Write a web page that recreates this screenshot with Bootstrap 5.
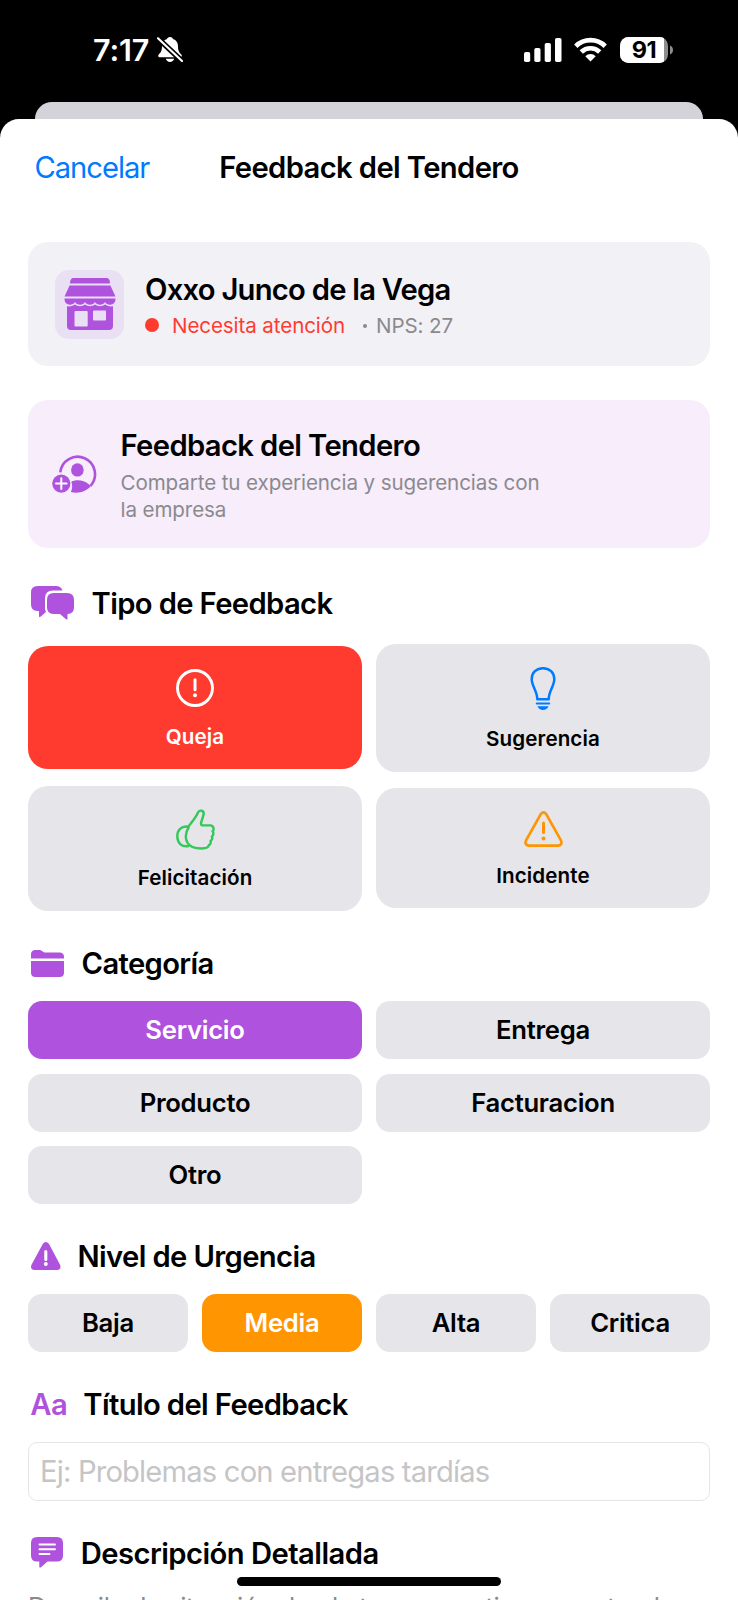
<!DOCTYPE html>
<html lang="es">
<head>
<meta charset="utf-8">
<meta name="viewport" content="width=device-width, initial-scale=1">
<title>Feedback del Tendero</title>
<link href="https://cdn.jsdelivr.net/npm/bootstrap@5.3.0/dist/css/bootstrap.min.css" rel="stylesheet">
<style>
  :root { --purple:#af52de; --red:#ff3b30; --blue:#007aff; --green:#34c759; --orange:#ff9500; --fill:#e5e5ea; --muted:#8a8a8e; }
  body { font-family: Inter, "Liberation Sans", sans-serif; background:#000; color:#000; overflow:hidden; }
  .phone { width:738px; height:1600px; }
  .statusbar { height:101.6px; padding:0 64px 2px 93px; }
  .clock { font-size:30.5px; font-weight:600; letter-spacing:-.1px; line-height:36px; }
  .backsheet { height:35px; margin:0 35px -18px; background:#d4d3d9; border-radius:17px 17px 0 0; }
  .sheet { height:1482px; border-radius:19px 19px 0 0; padding:0 28px; position:relative; }
  .navtop { height:98px; margin-bottom:25.7px; }
  .navtop > * { flex:1 1 0; min-width:0; }
  .t17 { font-size:29.2px; line-height:36px; white-space:nowrap; letter-spacing:-.62px; }
  .t15 { font-size:25.7px; line-height:31px; letter-spacing:-.4px; }
  .t12 { font-size:20.6px; line-height:27px; letter-spacing:-.11px; }
  .semi { font-weight:600; }
  .c-blue { color:var(--blue); } .c-red { color:var(--red); } .c-muted { color:var(--muted); } .c-purple { color:var(--purple); }
  .panel { border-radius:20px; }
  .panel-store { height:123.5px; background:#f2f1f6; padding:0 27px; gap:21px; margin-bottom:34.3px; }
  .panel-info { height:148px; background:#f7edfb; padding:0 23.5px; gap:24px; margin-bottom:37.4px; }
  .storeicon { width:69px; height:69px; border-radius:14px; background:#e9e1f3; }
  .dot { width:14px; height:14px; border-radius:50%; background:var(--red); }
  .bullet { width:4.500px; height:4.500px; border-radius:50%; background:var(--muted); margin:2px 9px 0 17.500px; }
  .heading { height:36px; padding-left:3px; margin-bottom:20.4px; }
  .heading svg { flex:none; }
  .heading .t17 { padding-top:2px; }
  .types { display:grid; grid-template-columns:1fr 1fr; gap:14px; align-items:center; margin-bottom:34.3px; }
  .tile { border:0; border-radius:20px; background:var(--fill); padding:23px 0 19.3px; color:#000; font-size:20.6px; font-weight:600; line-height:26px; letter-spacing:.1px; }
  .tile svg { display:block; margin:0 auto; }
  .chips { display:grid; gap:14.1px; margin-bottom:34px; }
  .chip { border:0; border-radius:14px; height:58px; background:var(--fill); color:#000; padding:0; font-size:25.7px; font-weight:600; letter-spacing:-.3px; line-height:58px; }
  .field { height:58.5px; border:1.5px solid #e6e6e8; border-radius:9px; padding:0 11px; background:#fff; color:#000; box-shadow:none; margin-bottom:34px; letter-spacing:-.83px; }
  .field::placeholder { color:#c5c5c7; opacity:1; }
  .homebar { position:absolute; left:237px; top:1458.5px; width:264px; height:9px; border-radius:5px; background:#000; }
</style>
</head>
<body>
<div class="phone overflow-hidden">
  <div class="statusbar d-flex align-items-center text-white">
    <span class="clock">7:17</span>
    <svg style="margin-left:8px" width="26" height="27" viewBox="0 0 26 27" fill="#fff">
      <path d="M13 1c1.800 0 2.800 1 3 2 3.300 1 5 3.800 5 7 0 5 1.200 6.300 3.300 8.500.9 1 .7 2.700-1 2.700H2.700C1 21.200.9 19.500 1.700 18.500 3.800 16.300 5 15 5 10c0-3.200 1.700-6 5-7 .2-1 1.200-2 3-2zM8.800 22.800h8.400c-.5 2-2.200 3.200-4.200 3.200s-3.700-1.200-4.200-3.200z"/>
      <path d="M1 2.500 25 25" stroke="#000" stroke-width="5.500"/>
      <path d="M1 2.300 25 25" stroke="#fff" stroke-width="2.200" stroke-linecap="round"/>
    </svg>
    <div class="d-flex align-items-center ms-auto">
      <svg width="38" height="24" viewBox="0 0 38 24" fill="#fff">
        <rect x="0" y="14" width="6.200" height="10" rx="1.800"/><rect x="10.300" y="10" width="6.200" height="14" rx="1.800"/><rect x="20.700" y="5" width="6.200" height="19" rx="1.800"/><rect x="31" y="0" width="6.500" height="24" rx="1.800"/>
      </svg>
      <svg width="33" height="25" viewBox="0 0 33 25" style="margin-left:12.500px">
        <g fill="none" stroke="#fff" stroke-width="4.700"><path d="M1.800 9.200a21 21 0 0 1 29.400 0"/><path d="M7.300 15a13.200 13.200 0 0 1 18.400 0"/></g>
        <path d="M16.500 24.500 11.300 19.200a7.500 7.500 0 0 1 10.400 0z" fill="#fff"/>
      </svg>
      <svg width="54" height="26" viewBox="0 0 54 26" style="margin-left:13px">
        <defs><clipPath id="cell"><rect width="48" height="26" rx="8.500"/></clipPath></defs>
        <g clip-path="url(#cell)"><rect width="48" height="26" fill="#8d8d8d"/><rect width="44" height="26" fill="#fff"/></g>
        <path d="M50 8.500c2 .8 3 2.300 3 4.500s-1 3.700-3 4.500z" fill="#8d8d8d"/>
        <text x="24" y="21.300" text-anchor="middle" font-family="Inter, sans-serif" font-weight="700" font-size="23.500" letter-spacing="-.4">91</text>
      </svg>
    </div>
  </div>
  <div class="backsheet"></div>
  <main class="sheet bg-white">
    <nav class="navtop d-flex align-items-center">
      <div><a class="t17 c-blue text-decoration-none" href="#" style="letter-spacing:-1.050px;margin-left:6.500px">Cancelar</a></div>
      <span class="t17 semi text-center flex-grow-0" style="flex-basis:300px">Feedback del Tendero</span>
      <span></span>
    </nav>

    <section class="panel panel-store d-flex align-items-center">
      <div class="storeicon d-flex align-items-center justify-content-center">
        <svg width="52" height="53" viewBox="0 0 52 53" fill="#af52de">
          <path d="M9.500 0h33Q46 0 46 5.500H6Q6 0 9.500 0zM5.600 7.500h40.800L51.500 18.600H.5z"/>
          <path d="M.5 20.500h51c0 4-2 6.200-5.500 6.200-2.200 0-4-1-5-2.700-1 1.700-2.800 2.700-5 2.700s-4-1-5-2.700c-1 1.700-2.800 2.700-5 2.700s-4-1-5-2.700c-1 1.700-2.800 2.700-5 2.700s-4-1-5-2.700c-1 1.700-2.800 2.700-5 2.700C2.500 26.700.5 24.500.5 20.500z"/>
          <path fill-rule="evenodd" d="M3 28.300c3 .4 5.600-.2 8-1.800 3 2.200 7 2.200 10 0 3 2.200 7 2.200 10 0 3 2.200 7 2.200 10 0 2.400 1.600 5 2.200 8 1.800V48q0 4-4 4H7q-4 0-4-4zM11.500 33q-1 0-1 1v13.500q0 1 1 1h11.200q1 0 1-1V34q0-1-1-1zM30 32.500q-1 0-1 1v8q0 1 1 1h11q1 0 1-1v-8q0-1-1-1z"/>
        </svg>
      </div>
      <div style="padding-top:2px">
        <div class="t17 semi" style="letter-spacing:-.750px">Oxxo Junco de la Vega</div>
        <div class="t12 d-flex align-items-center mt-1">
          <span class="dot"></span><span class="c-red" style="margin-left:13px">Necesita atención</span>
          <span class="bullet"></span><span class="c-muted">NPS: 27</span>
        </div>
      </div>
    </section>

    <section class="panel panel-info d-flex align-items-center">
      <svg width="45" height="39" viewBox="0 0 45 39">
        <path d="M8.300 17.300A17.400 17.400 0 1 1 38.500 30.800" fill="none" stroke="#af52de" stroke-width="2.600"/>
        <ellipse cx="25.400" cy="14.900" rx="6.300" ry="6.700" fill="#af52de"/>
        <path d="M19.300 26.700c4-2.300 12.500-2.300 17.500 2.600l2 2c-5 5.500-12.500 7.700-20 5.700 1.600-3 1.900-7 .5-10.300z" fill="#af52de"/>
        <circle cx="9.300" cy="28.600" r="9.100" fill="#af52de"/>
        <path d="M9.300 23.300v10.600M4 28.600h10.600" stroke="#fff" stroke-width="2" stroke-linecap="round"/>
      </svg>
      <div style="padding-top:2.500px">
        <div class="t17 semi">Feedback del Tendero</div>
        <div class="t12 c-muted" style="margin-top:4.500px">Comparte tu experiencia y sugerencias con<br>la empresa</div>
      </div>
    </section>

    <div class="heading d-flex align-items-center" style="margin-bottom:22.600px">
      <svg width="43" height="34" viewBox="0 0 43 34" fill="#af52de" style="margin-right:17.500px">
        <path d="M6.500 0H25q5 0 6.500 4.500H22q-8 0-8 8v9.500q0 2.500 1 4l-5.500 4.800q-1.500 1-1.500-.8V25H6.500Q0 25 0 18.500v-12Q0 0 6.500 0z"/>
        <path d="M22.500 7H36q7 0 7 7v7.500q0 6.500-6.500 6.500v4.500q0 1.500-1.500.8L29 28h-6.500q-6.500 0-6.500-6.500V14q0-7 6.500-7z"/>
      </svg>
      <span class="t17 semi">Tipo de Feedback</span>
    </div>
    <div class="types">
      <button class="tile text-white" style="background:var(--red)">
        <svg width="38" height="38" viewBox="0 0 38 38" fill="none" stroke="#fff"><circle cx="19" cy="19" r="17.500" stroke-width="2.900"/><path d="M19 10.800v10" stroke-width="3" stroke-linecap="round"/><circle cx="19" cy="26.200" r="2" fill="#fff" stroke="none"/></svg>
        <span class="d-block" style="margin-top:16.700px">Queja</span>
      </button>
      <button class="tile">
        <svg width="26" height="43" viewBox="0 0 26 43" fill="none" stroke="#007aff" stroke-width="2.500"><path d="M7.300 32.200h11.400c0-8 5.600-13 5.600-20.200C24.300 5.500 19.500 1.200 13 1.200S1.700 5.500 1.700 12c0 7.200 5.600 12.200 5.600 20.200z" stroke-linejoin="round"/><path d="M6.800 36.500h12.400" stroke-width="2.100" stroke-linecap="round"/><path d="M7.500 39.300h11c-1 2.600-3 3.700-5.500 3.700s-4.500-1.100-5.500-3.700z" fill="#007aff" stroke="none"/></svg>
        <span class="d-block" style="margin-top:16.200px">Sugerencia</span>
      </button>
      <button class="tile">
        <svg width="39" height="41" viewBox="0 0 39 41" fill="none" stroke="#34c759" stroke-width="2.400" stroke-linejoin="round" stroke-linecap="round"><path d="M11.800 18.500C15.500 13 19.500 9.500 22 3.500c1.300-3 6.300-2.300 5.600 1.700-.7 4-2.600 7-2.600 9.500 0 1.300.9 1.800 2.300 1.700h7c3.600.4 4 4.200 2.300 5.800 1.300 1.700 1 4-.7 5.200.7 1.800.2 3.700-1.300 4.500.5 2-.3 3.600-1.800 4.300-.3 2.800-3.600 3.300-7 3.300-6.600 0-12-1-14.500-6-2.300-4.700-1.900-10 1.300-15z"/><path d="M11.500 17.600c-6.300-.6-10.200 3.400-10.200 9.600 0 6.700 4.200 10.800 10.700 10"/></svg>
        <span class="d-block" style="margin-top:15.900px">Felicitación</span>
      </button>
      <button class="tile">
        <svg width="39" height="36" viewBox="0 0 39 36" fill="none" stroke="#ff9500"><path d="M16.700 3.300q2.800-3.800 5.600 0L36.800 29q2.200 5-2.600 5.600H4.800Q0 34 2.200 29z" stroke-width="2.600"/><path d="M19.500 12v9.500" stroke-width="3" stroke-linecap="round"/><circle cx="19.500" cy="27.500" r="2" fill="#ff9500" stroke="none"/></svg>
        <span class="d-block" style="margin-top:15.900px">Incidente</span>
      </button>
    </div>

    <div class="heading d-flex align-items-center">
      <svg width="33" height="27" viewBox="0 0 33 27" fill="#af52de" style="margin-right:17.500px"><path d="M0 8.600V4.500Q0 0 4.500 0h4Q10 0 11.300 1.200l1.200.8q.8.500 2 .5h14Q33 2.500 33 7v1.600zM0 11h33v11.500q0 4.500-4.500 4.500h-24Q0 27 0 22.500z"/></svg>
      <span class="t17 semi">Categoría</span>
    </div>
    <div class="chips" style="grid-template-columns:1fr 1fr">
      <button class="chip text-white" style="background:var(--purple)">Servicio</button>
      <button class="chip">Entrega</button>
      <button class="chip">Producto</button>
      <button class="chip">Facturacion</button>
      <button class="chip">Otro</button>
    </div>

    <div class="heading d-flex align-items-center">
      <svg width="30" height="28" viewBox="0 0 31 28" preserveAspectRatio="none" style="margin-right:16.500px"><path d="M12.300 1.800q3-3.600 6.200 0L30 22.800q1.800 4.500-3 5.200H3.500q-4.800-.7-3-5.200z" fill="#af52de"/><path d="M15.300 9.500v8" stroke="#fff" stroke-width="3.200" stroke-linecap="round"/><circle cx="15.300" cy="22" r="2" fill="#fff"/></svg>
      <span class="t17 semi">Nivel de Urgencia</span>
    </div>
    <div class="chips" style="grid-template-columns:repeat(4,1fr)">
      <button class="chip">Baja</button>
      <button class="chip text-white" style="background:var(--orange)">Media</button>
      <button class="chip">Alta</button>
      <button class="chip">Critica</button>
    </div>

    <div class="heading d-flex align-items-center">
      <span class="t17 semi c-purple" style="width:53px;margin-left:-.700px">Aa</span>
      <span class="t17 semi">Título del Feedback</span>
    </div>
    <input class="form-control field t17" placeholder="Ej: Problemas con entregas tardías">

    <div class="heading d-flex align-items-center">
      <svg width="32" height="31" viewBox="0 0 32 31" style="margin-right:17.700px"><path d="M6 0h20q6 0 6 6v12.500q0 6-6 6H16.500L10 30.200q-1.700 1.200-1.700-.7v-5H6q-6 0-6-6V6q0-6 6-6z" fill="#af52de"/><path d="M8.500 7.500h15.500M8.500 12.200h15.500M8.500 17h10" stroke="#fff" stroke-width="1.900" stroke-linecap="round"/></svg>
      <span class="t17 semi" style="letter-spacing:-.540px">Descripción Detallada</span>
    </div>
    <p class="t15 c-muted mb-0 text-nowrap">Describe la situación desde tu perspectiva como tendero</p>
    <div class="homebar"></div>
  </main>
</div>
<script src="https://cdn.jsdelivr.net/npm/bootstrap@5.3.0/dist/js/bootstrap.bundle.min.js"></script>
</body>
</html>
